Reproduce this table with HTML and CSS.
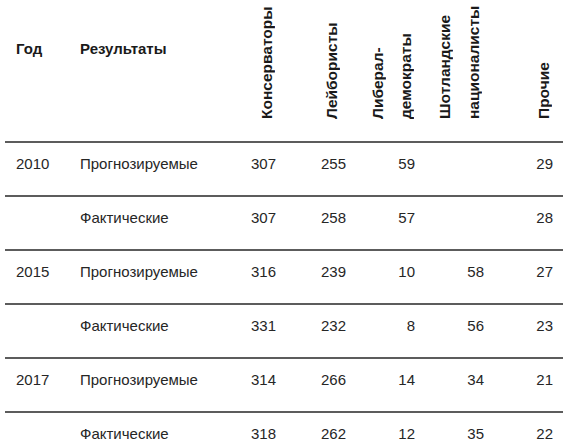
FILE: index.html
```html
<!DOCTYPE html>
<html lang="ru">
<head>
<meta charset="utf-8">
<title>Результаты выборов</title>
<link rel="stylesheet" href="styles.css">
</head>
<body>
<table class="results">
  <colgroup>
    <col class="c-year">
    <col class="c-kind">
    <col class="c-con">
    <col class="c-lab">
    <col class="c-lib">
    <col class="c-snp">
    <col class="c-oth">
  </colgroup>
  <thead>
    <tr>
      <th class="h-text h-year">Год</th>
      <th class="h-text">Результаты</th>
      <th class="h-vert"><div class="vh vh-con"><span class="v">Консерваторы</span></div></th>
      <th class="h-vert"><div class="vh vh-lab"><span class="v">Лейбористы</span></div></th>
      <th class="h-vert"><div class="vh vh-lib"><span class="v">Либерал-</span><span class="v">демократы</span></div></th>
      <th class="h-vert"><div class="vh vh-snp"><span class="v">Шотландские</span><span class="v">националисты</span></div></th>
      <th class="h-vert"><div class="vh vh-oth"><span class="v">Прочие</span></div></th>
    </tr>
  </thead>
  <tbody>
    <tr>
      <td class="year">2010</td><td class="kind">Прогнозируемые</td>
      <td class="num">307</td><td class="num">255</td><td class="num">59</td><td class="num"></td><td class="num last">29</td>
    </tr>
    <tr>
      <td class="year"></td><td class="kind">Фактические</td>
      <td class="num">307</td><td class="num">258</td><td class="num">57</td><td class="num"></td><td class="num last">28</td>
    </tr>
    <tr>
      <td class="year">2015</td><td class="kind">Прогнозируемые</td>
      <td class="num">316</td><td class="num">239</td><td class="num">10</td><td class="num">58</td><td class="num last">27</td>
    </tr>
    <tr>
      <td class="year"></td><td class="kind">Фактические</td>
      <td class="num">331</td><td class="num">232</td><td class="num">8</td><td class="num">56</td><td class="num last">23</td>
    </tr>
    <tr>
      <td class="year">2017</td><td class="kind">Прогнозируемые</td>
      <td class="num">314</td><td class="num">266</td><td class="num">14</td><td class="num">34</td><td class="num last">21</td>
    </tr>
    <tr>
      <td class="year"></td><td class="kind">Фактические</td>
      <td class="num">318</td><td class="num">262</td><td class="num">12</td><td class="num">35</td><td class="num last">22</td>
    </tr>
  </tbody>
</table>
</body>
</html>
```

FILE: styles.css
```css
html, body {
  margin: 0;
  padding: 0;
  background: #ffffff;
}

body {
  font-family: "Liberation Sans", Arial, sans-serif;
  color: #222222;
  overflow: hidden;
}

.results {
  margin-left: 5px;
  width: 558px;
  border-collapse: collapse;
  table-layout: fixed;
  font-size: 15px;
  line-height: 17px;
}

.c-year { width: 75px; }
.c-kind { width: 146px; }
.c-con  { width: 50px; }
.c-lab  { width: 70px; }
.c-lib  { width: 69px; }
.c-snp  { width: 69px; }
.c-oth  { width: 79px; }

thead th {
  box-sizing: border-box;
  height: 141px;
  padding: 0;
  font-weight: bold;
  color: #1a1a1a;
  border-bottom: 2px solid #5c5c5c;
}

.h-text {
  text-align: left;
  vertical-align: top;
  padding-top: 40px;
}

.h-year {
  padding-left: 11px;
}

.h-vert {
  vertical-align: top;
}

.vh {
  display: flex;
  justify-content: flex-end;
  height: 141px;
  box-sizing: border-box;
  padding-bottom: 22px;
  overflow: hidden;
}

.v {
  display: block;
  height: 119px;
  width: 17px;
  writing-mode: vertical-rl;
  transform: rotate(180deg);
  text-align: start;
  line-height: 17px;
  white-space: nowrap;
  font-size: 15.5px;
}

.vh-con { padding-right: 1px; }
.vh-lab { padding-right: 6px; }
.vh-lib { padding-right: 1px; gap: 11px; }
.vh-snp { padding-right: 2px; gap: 12px; }
.vh-oth { padding-right: 11px; }

tbody td {
  height: 52px;
  box-sizing: border-box;
  padding: 12px 0 23px 0;
  vertical-align: top;
  border-bottom: 2px solid #5c5c5c;
  color: #262626;
  white-space: nowrap;
}

tbody tr:last-child td {
  border-bottom: none;
}

.year {
  padding-left: 11px;
}

.num {
  text-align: right;
}

.num.last {
  padding-right: 10px;
}
```
